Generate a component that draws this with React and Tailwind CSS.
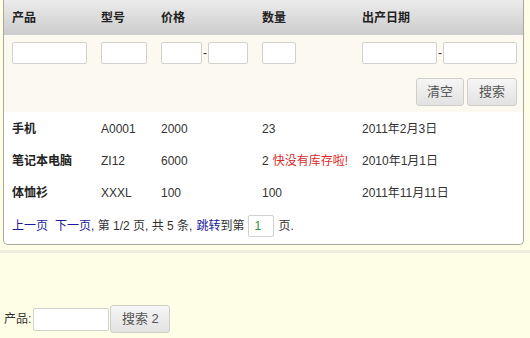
import React from "react";

const cols = "grid grid-cols-[89px_60px_101px_100px_1fr] items-center pl-2";
const inputCls = "h-[22px] border border-[#d2d2cc] rounded-[2px] bg-white outline-none px-1 text-[12px]";
const btnCls = "h-[28px] border border-[#cfcfc8] rounded-[3px] bg-linear-to-b from-[#f6f6f6] to-[#e2e2e2] text-[13px] text-[#555]";

const rows = [
  { name: "手机", model: "A0001", price: "2000", qty: "23", date: "2011年2月3日" },
  { name: "笔记本电脑", model: "ZI12", price: "6000", qty: "2", warn: "快没有库存啦!", date: "2010年1月1日" },
  { name: "体恤衫", model: "XXXL", price: "100", qty: "100", date: "2011年11月11日" },
];

export default function App() {
  return (
    <div className="w-[530px] h-[338px] bg-[#fefde6] text-[12px] text-[#333] font-['Liberation_Sans','Noto_Sans_CJK_SC',sans-serif] overflow-hidden">
      {/* Product grid panel */}
      <div className="ml-[3px] w-[521px] border border-t-0 border-[#a9a89a] rounded-b-[5px] overflow-hidden bg-white">
        <div className={`${cols} h-[35px] bg-linear-to-b from-[#ececec] to-[#cccccc] font-bold text-[#222]`}>
          <span>产品</span>
          <span>型号</span>
          <span>价格</span>
          <span>数量</span>
          <span>出产日期</span>
        </div>

        {/* Filters */}
        <div className="h-[77px] bg-[#fcfaf0] pt-[7px]">
          <div className={`${cols} items-start`}>
            <input className={`${inputCls} w-[75px]`} />
            <input className={`${inputCls} w-[46px]`} />
            <div className="flex items-center">
              <input className={`${inputCls} w-[41px]`} />
              <span className="w-[6px] text-center">-</span>
              <input className={`${inputCls} w-[40px]`} />
            </div>
            <input className={`${inputCls} w-[34px]`} />
            <div className="flex items-center">
              <input className={`${inputCls} w-[75px]`} />
              <span className="w-[6px] text-center">-</span>
              <input className={`${inputCls} w-[74px]`} />
            </div>
          </div>
          <div className="flex justify-end gap-[3px] pr-[6px] mt-[14px]">
            <button className={`${btnCls} w-[48px]`}>清空</button>
            <button className={`${btnCls} w-[50px]`}>搜索</button>
          </div>
        </div>

        {/* Data rows */}
        <div className="pt-px">
          {rows.map((r) => (
            <div key={r.name} className={`${cols} h-[32px]`}>
              <span className="font-bold text-[#222]">{r.name}</span>
              <span>{r.model}</span>
              <span>{r.price}</span>
              <span className="whitespace-nowrap">
                {r.qty}
                {r.warn && <span className="ml-1 text-[#d42a2a]">{r.warn}</span>}
              </span>
              <span>{r.date}</span>
            </div>
          ))}
        </div>

        {/* Pagination */}
        <div className="h-[35px] flex items-center pl-2 pb-px">
          <span className="text-[#1a1a9c]">上一页</span>
          <span className="ml-[7px] text-[#1a1a9c]">下一页</span>
          <span>, 第 1/2 页, 共 5 条, </span>
          <span className="ml-1 text-[#1a1a9c]">跳转</span>
          <span>到第</span>
          <input
            defaultValue="1"
            className="mx-[4px] w-[26px] h-[22px] border border-[#d2d2cc] rounded-[2px] px-[5px] text-[12px] text-[#3a8a3a] outline-none"
          />
          <span>页.</span>
        </div>
      </div>

      <div className="mt-[5px] h-[3px] bg-[#efeedc]" />

      {/* Second search form */}
      <div className="flex items-center mt-[52px] pl-[4px]">
        <span>产品:</span>
        <input className={`${inputCls} ml-[2px] w-[76px] h-[23px]`} />
        <button className={`${btnCls} w-[60px] h-[27px] ml-px`}>搜索 2</button>
      </div>
    </div>
  );
}
